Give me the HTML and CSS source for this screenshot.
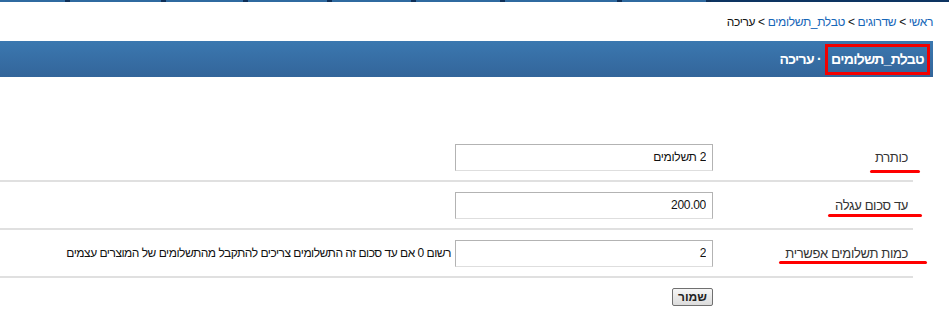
FILE: index.html
```html
<!DOCTYPE html>
<html lang="he" dir="rtl">
<head>
  <meta charset="UTF-8">
  <title>טבלת_תשלומים · עריכה</title>
  <link rel="stylesheet" href="styles.css">
</head>
<body>
  <div class="topline">
    <span class="seg w70"></span><span class="seg w96"></span><span class="seg w82"></span><span class="seg w84"></span><span class="seg w84"></span><span class="seg w89"></span><span class="seg w117"></span><span class="seg w89"></span><span class="dark"></span>
  </div>
  <div class="page">
    <div class="crumbs">
      <a href="#">ראשי</a> &gt; <a href="#">שדרוגים</a> &gt; <a href="#">טבלת_תשלומים</a> &gt; עריכה
    </div>
    <div class="titlebar">
      <span class="mark">טבלת_תשלומים</span> · עריכה
    </div>
    <form class="edit">
      <div class="row">
        <label class="lbl"><span class="ul u1">כותרת</span></label>
        <input class="field" type="text" value="2 תשלומים">
      </div>
      <div class="row">
        <label class="lbl"><span class="ul u2">עד סכום עגלה</span></label>
        <input class="field" type="text" value="200.00">
      </div>
      <div class="row">
        <label class="lbl"><span class="ul u3">כמות תשלומים אפשרית</span></label>
        <input class="field" type="text" value="2">
        <span class="help">רשום 0 אם עד סכום זה התשלומים צריכים להתקבל מהתשלומים של המוצרים עצמים</span>
      </div>
      <div class="actions">
        <button type="button">שמור</button>
      </div>
    </form>
  </div>
</body>
</html>
```

FILE: styles.css
```css
body {
  margin: 0;
  font-family: "Liberation Sans", Arial, sans-serif;
  font-size: 12px;
  color: #222;
  background: #fff;
}
.topline {
  display: flex;
  direction: ltr;
  height: 2px;
}
.seg {
  height: 2px;
  background: #2f6aa0;
  border-right: 5px solid #0e2f58;
}
.w70 { width: 65px; }
.w96 { width: 91px; }
.w82 { width: 77px; }
.w84 { width: 79px; }
.w89 { width: 84px; }
.w117 { width: 112px; }
.dark {
  flex: 1;
  background: #0d3461;
}
.page {
  padding-right: 16px;
}
.crumbs {
  text-align: right;
  padding: 12px 0 0;
  height: 27px;
  line-height: 16px;
  color: #111;
  letter-spacing: -0.35px;
}
.crumbs a {
  color: #1666b8;
  text-decoration: none;
}
.titlebar {
  height: 36px;
  background: linear-gradient(#3b78b0, #33659a);
  color: #fff;
  font-weight: bold;
  font-size: 14px;
  letter-spacing: -0.7px;
  display: flex;
  align-items: center;
  gap: 4px;
  padding-right: 3px;
}
.mark {
  border: 3px solid #f20000;
  padding: 4px 3px 5px;
}
.edit {
  margin-top: 57px;
  margin-right: 20px;
}
.row {
  display: flex;
  align-items: center;
  height: 46px;
  border-bottom: 2px solid #e0e0e0;
}
.lbl {
  width: 195px;
  padding-right: 5px;
  font-size: 13px;
  letter-spacing: -0.35px;
  color: #333;
}
.ul {
  position: relative;
}
.ul::after {
  content: "";
  position: absolute;
  height: 3px;
  background: #f00;
  border-radius: 2px;
}
.u1::after { right: -12px; left: -5px; top: 20px; }
.u2::after { right: -14px; left: -7px; top: 16px; }
.u3::after { right: -19px; left: -6px; top: 15px; }
.field {
  width: 258px;
  height: 27px;
  box-sizing: border-box;
  margin: 0;
  border: 1px solid #b3b3b3;
  border-bottom-color: #dedede;
  padding: 0 6px;
  font-family: "Liberation Sans", Arial, sans-serif;
  font-size: 12px;
  letter-spacing: -0.3px;
  color: #111;
  text-align: right;
}
.help {
  margin-right: 4px;
  font-size: 12px;
  letter-spacing: -0.5px;
  color: #111;
}
.actions {
  padding: 10px 200px 0 0;
}
button {
  height: 18px;
  padding: 0 5px;
  font-family: "Liberation Sans", Arial, sans-serif;
  font-size: 12px;
  font-weight: bold;
  color: #222;
  background: linear-gradient(#f6f6f6, #dcdcdc);
  border: 1px solid #707070;
  border-radius: 2px;
}
```
